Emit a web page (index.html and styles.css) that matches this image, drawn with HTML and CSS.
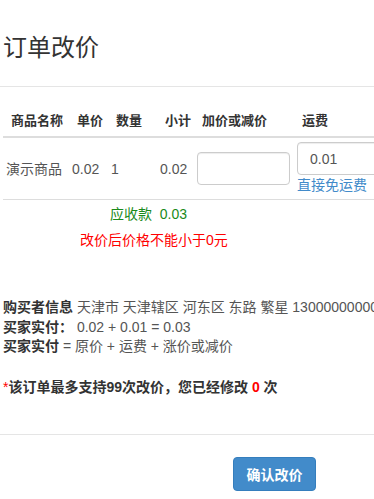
FILE: index.html
```html
<!DOCTYPE html>
<html lang="zh-CN">
<head>
    <meta charset="UTF-8">
    <meta name="viewport" content="width=device-width, initial-scale=1.0">
    <title>订单改价</title>
    <link rel="stylesheet" href="styles.css">
</head>
<body>
    <div class="modal">
        <div class="modal-header">
            <h4 class="modal-title">订单改价</h4>
        </div>

        <div class="modal-body">
            <!-- 商品列表 -->
            <table class="goods-table">
                <colgroup>
                    <col class="col-name">
                    <col class="col-price">
                    <col class="col-num">
                    <col class="col-sub">
                    <col class="col-change">
                    <col class="col-ship">
                </colgroup>
                <thead>
                    <tr>
                        <th>商品名称</th>
                        <th>单价</th>
                        <th>数量</th>
                        <th>小计</th>
                        <th>加价或减价</th>
                        <th>运费</th>
                    </tr>
                </thead>
                <tbody>
                    <tr>
                        <td>演示商品</td>
                        <td>0.02</td>
                        <td>1</td>
                        <td>0.02</td>
                        <td><input type="text" class="form-control change-input"></td>
                        <td class="ship-cell">
                            <input type="text" class="form-control ship-input" value="0.01">
                            <a href="#" class="free-ship">直接免运费</a>
                        </td>
                    </tr>
                </tbody>
            </table>

            <div class="total">应收款&nbsp; 0.03</div>
            <div class="error-tip">改价后价格不能小于0元</div>

            <div class="buyer-info">
                <div><b>购买者信息</b> 天津市 天津辖区 河东区 东路 繁星 13000000000</div>
                <div><b>买家实付：</b> 0.02 + 0.01 = 0.03</div>
                <div><b>买家实付</b> = 原价 + 运费 + 涨价或减价</div>
            </div>

            <p class="notice"><span class="star">*</span>该订单最多支持99次改价，您已经修改 <span class="count">0</span> 次</p>
        </div>

        <div class="modal-footer">
            <button class="btn-primary">确认改价</button>
        </div>
    </div>
</body>
</html>
```

FILE: styles.css
```css
body {
    margin: 0;
    overflow: hidden;
    background-color: #fff;
    font-family: "Liberation Sans", "Noto Sans CJK SC", sans-serif;
    font-size: 14px;
    line-height: 20px;
    color: #333;
}

.modal {
    width: 100%;
    overflow: hidden;
}

.modal-header {
    padding: 35px 3px 25px;
    border-bottom: 1px solid #e5e5e5;
}

.modal-title {
    margin: 0;
    font-size: 24px;
    font-weight: normal;
    line-height: 26px;
    color: #333;
}

.modal-body {
    padding: 18px 0 0 3px;
}

.goods-table {
    table-layout: fixed;
    width: 401px;
    border-collapse: collapse;
    border-spacing: 0;
}

.col-name { width: 66px; }
.col-price { width: 39px; }
.col-num { width: 49px; }
.col-sub { width: 37px; }
.col-change { width: 100px; }
.col-ship { width: 110px; }

.goods-table th {
    padding: 6px 0 5px 8px;
    font-size: 13px;
    font-weight: bold;
    text-align: left;
    white-space: nowrap;
    border-bottom: 2px solid #ddd;
}

.goods-table td {
    padding: 0 0 0 3px;
    height: 57px;
    vertical-align: middle;
    white-space: nowrap;
    color: #555;
    border-bottom: 1px solid #ddd;
}

.goods-table td.ship-cell {
    padding-top: 2px;
    padding-bottom: 2px;
}

.form-control {
    display: block;
    box-sizing: border-box;
    height: 33px;
    padding: 6px 12px;
    font-family: inherit;
    font-size: 14px;
    color: #555;
    background-color: #fff;
    border: 1px solid #ccc;
    border-radius: 4px;
    box-shadow: inset 0 1px 1px rgba(0, 0, 0, .075);
}

.change-input {
    width: 93px;
}

.ship-input {
    width: 110px;
}

.free-ship {
    display: block;
    color: #428bca;
    text-decoration: none;
}

.total {
    margin-top: 4px;
    padding-left: 107px;
    color: #1a8a1a;
}

.error-tip {
    margin-top: 6px;
    padding-left: 77px;
    color: #f00;
}

.buyer-info {
    margin-top: 48px;
    line-height: 19.5px;
    white-space: nowrap;
    color: #555;
}

.buyer-info b {
    font-weight: bold;
    color: #333;
}

.notice {
    margin: 20px 0 0;
    font-weight: bold;
    white-space: nowrap;
}

.notice .star {
    color: #f00;
    font-weight: normal;
}

.notice .count {
    color: #f00;
}

.modal-footer {
    margin-top: 37px;
    padding: 22px 0 0 233px;
    border-top: 1px solid #e5e5e5;
}

.btn-primary {
    width: 83px;
    height: 34px;
    padding: 0;
    font-family: inherit;
    font-size: 14px;
    font-weight: bold;
    color: #fff;
    background-color: #428bca;
    border: 1px solid #357ebd;
    border-radius: 4px;
    cursor: pointer;
}
```
